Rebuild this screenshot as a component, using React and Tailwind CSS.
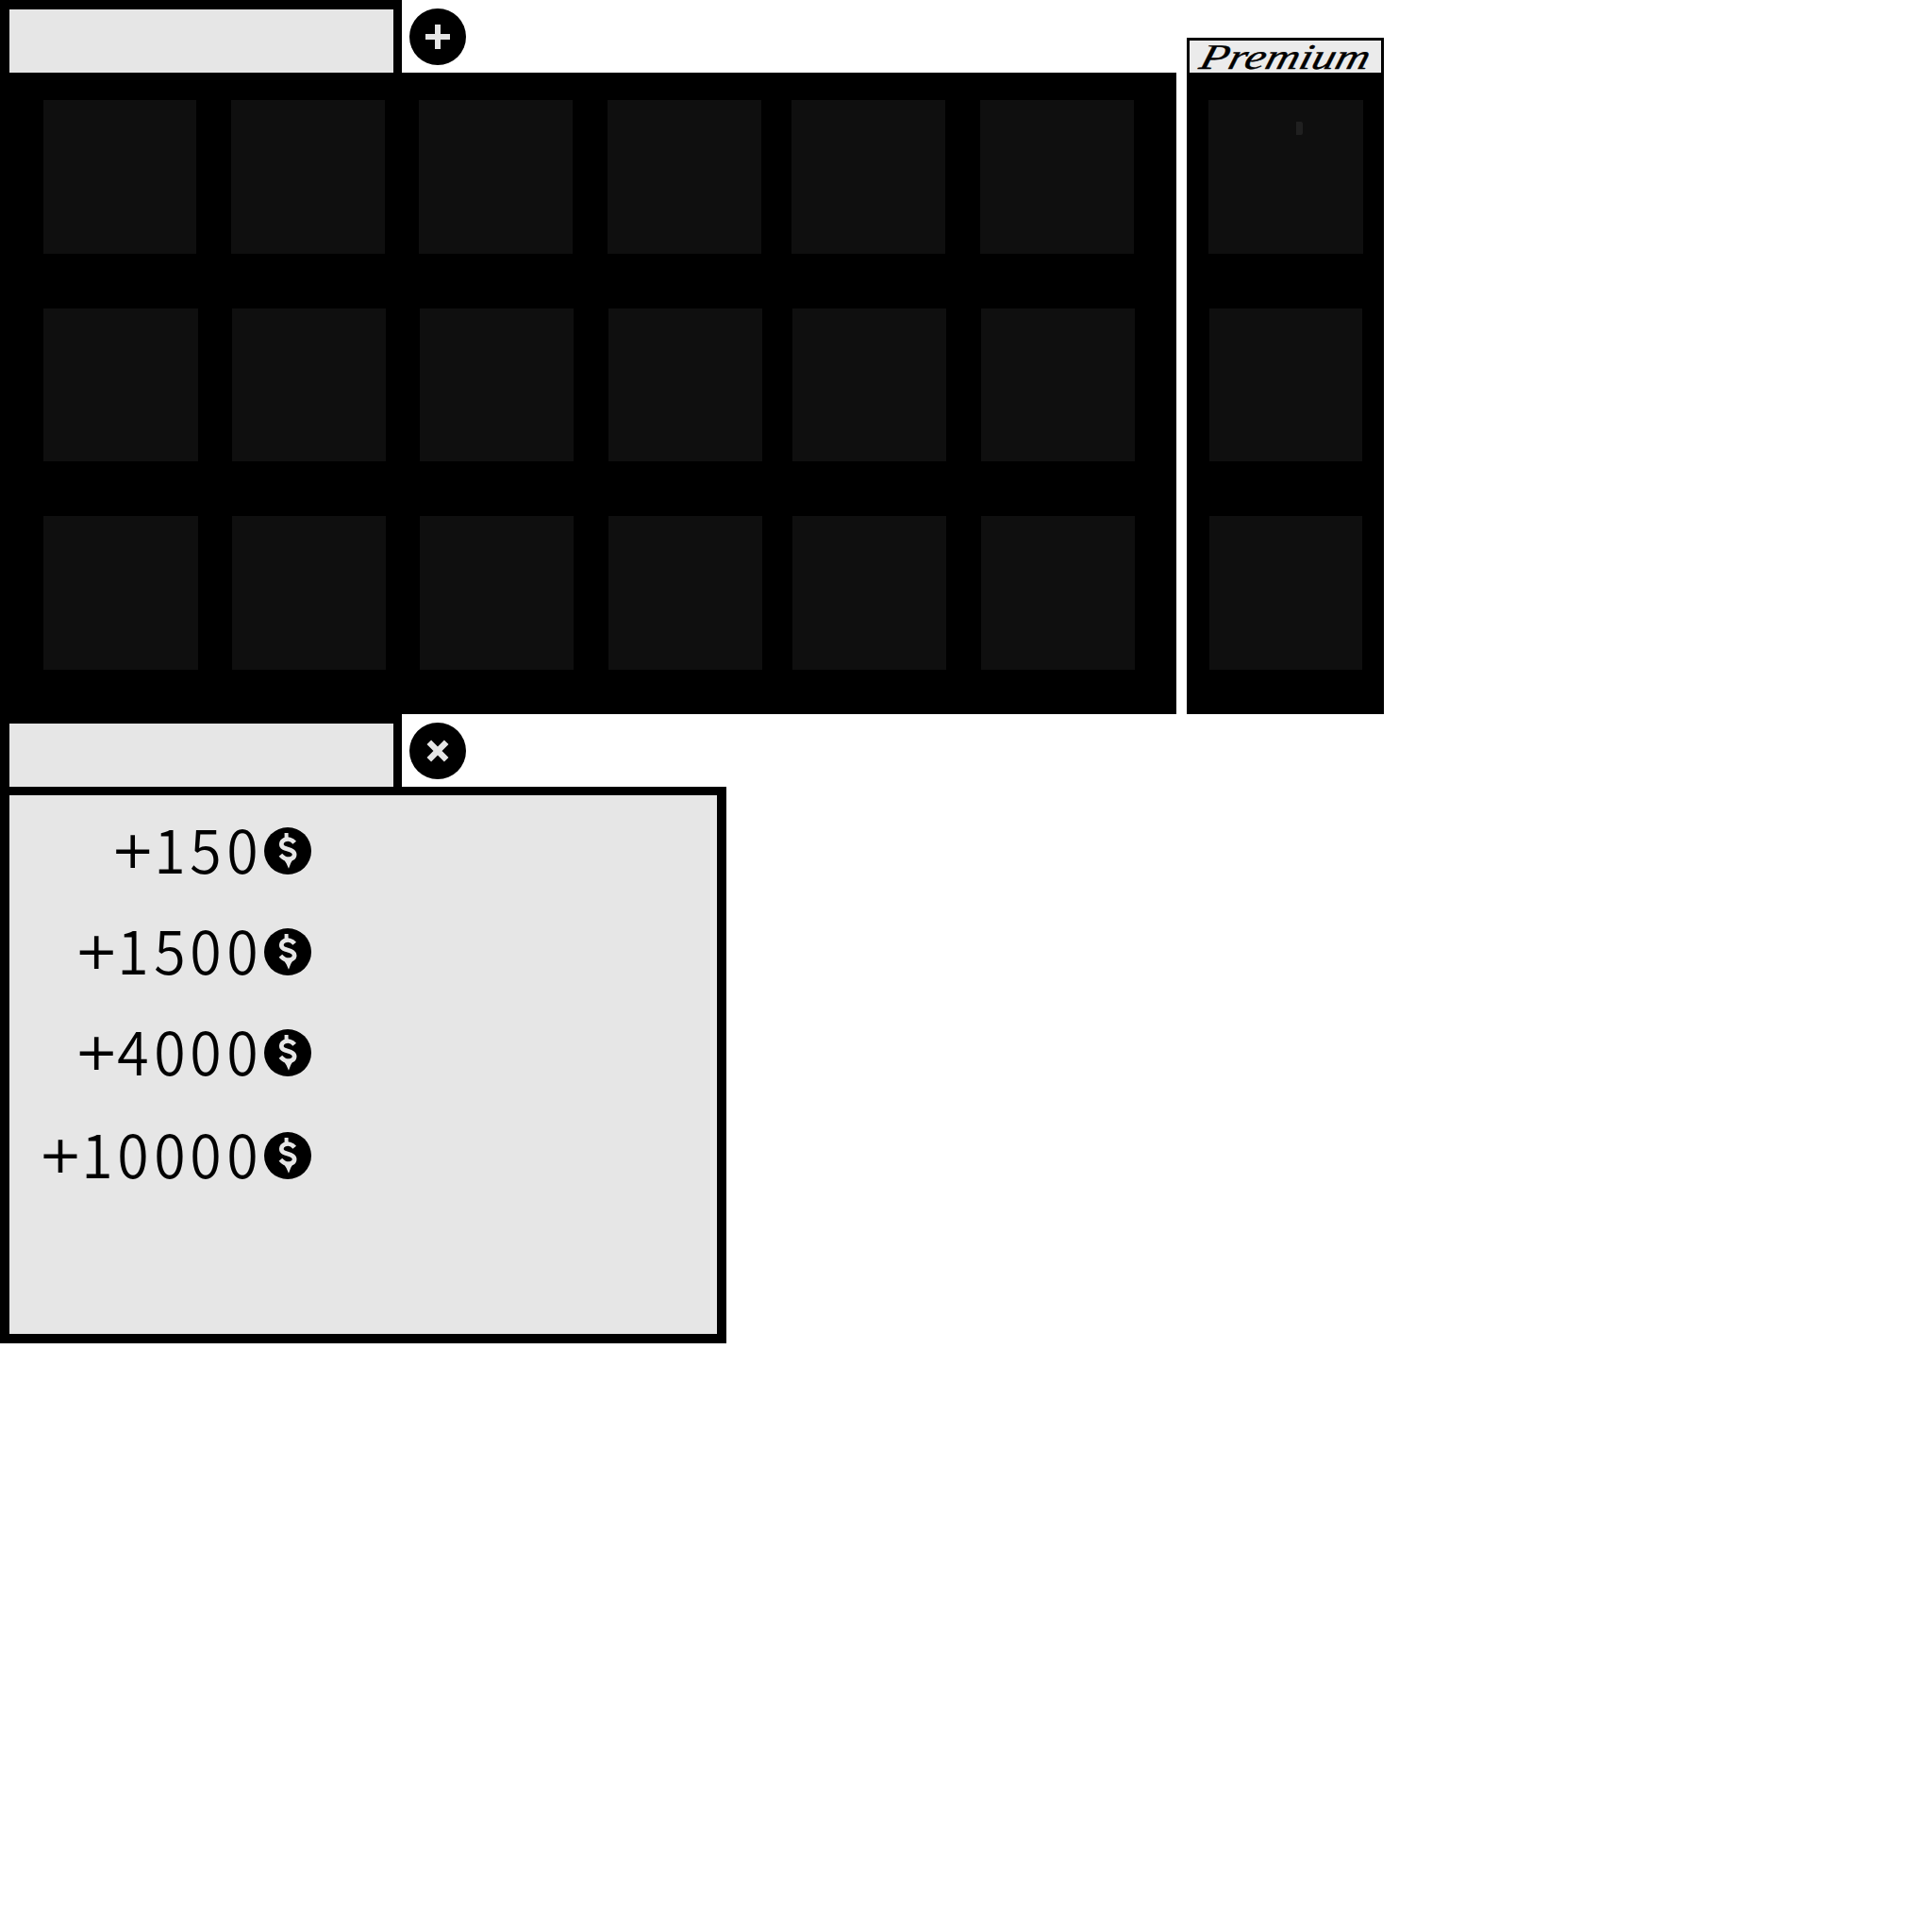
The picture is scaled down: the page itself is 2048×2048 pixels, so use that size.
function Slot({ className }) {
  return <div className={`shrink-0 bg-[#0f0f0f] ${className}`} />;
}

function Tab() {
  return (
    <div className="h-[77px] w-[426px] border-t-[10px] border-r-[9px] border-l-[10px] border-black bg-[#e6e6e6]" />
  );
}

function RoundButton({ label, className, children }) {
  return (
    <button aria-label={label} className={`ml-2 h-[60px] w-[60px] rounded-full bg-black ${className}`}>
      <svg viewBox="0 0 60 60" className="h-[60px] w-[60px]" stroke="#e6e6e6">
        {children}
      </svg>
    </button>
  );
}

function SlotRow({ first }) {
  if (first) {
    return (
      <div className="flex h-[163px]">
        <Slot className="ml-[46px] w-[162px]" />
        <Slot className="ml-[37px] w-[163px]" />
        <Slot className="ml-[36px] w-[163px]" />
        <Slot className="ml-[37px] w-[163px]" />
        <Slot className="ml-[32px] w-[163px]" />
        <Slot className="ml-[37px] w-[163px]" />
      </div>
    );
  }
  return (
    <div className="flex h-full">
      <Slot className="ml-[46px] w-[164px]" />
      <Slot className="ml-[36px] w-[163px]" />
      <Slot className="ml-[36px] w-[163px]" />
      <Slot className="ml-[37px] w-[163px]" />
      <Slot className="ml-[32px] w-[163px]" />
      <Slot className="ml-[37px] w-[163px]" />
    </div>
  );
}

function Coin() {
  return (
    <svg viewBox="0 0 50 50" className="ml-[5px] h-[50px] w-[50px] shrink-0">
      <circle cx="25" cy="25" r="25" fill="#000" />
      <path d="M21.6 6h4v6h-4z M20.5 33.5 31 33 28.2 38 26 43.7 23.6 38.3z" fill="#e6e6e6" />
      <path
        d="M32.2 16.2C29.5 12.8 25 11.8 21.8 13.2C17.5 15.2 17.2 19.6 20.8 21.6C23.5 23 27.5 23.4 30.2 25.4C33.5 28 32.3 32 28.5 33.2C24.5 34.4 20.3 32.6 17.4 29.2"
        fill="none"
        stroke="#e6e6e6"
        strokeWidth="4.7"
      />
    </svg>
  );
}

function Amount({ value }) {
  return (
    <div className="flex h-[50px] items-start justify-end">
      <span className="-mt-[1px] flex h-[50px] w-[38.4px] justify-center font-['DejaVu_Sans',sans-serif] text-[56px] leading-[50px]">
        <span>+</span>
      </span>
      {value.split("").map((digit, i) => (
        <span
          key={i}
          className="-mt-[4px] h-[50px] w-[38.4px] origin-center translate-x-[0.7px] scale-x-[0.95] text-center font-['Noto_Sans_CJK_JP',sans-serif] text-[64px] leading-[50px] font-[350]"
        >
          {digit}
        </span>
      ))}
      <Coin />
    </div>
  );
}

export default function App() {
  return (
    <main className="h-[2048px] w-[2048px] overflow-hidden bg-white text-black">
      <section className="flex h-[757px] items-start">
        <div className="w-[1247px]">
          <div className="flex h-[77px]">
            <Tab />
            <RoundButton label="Add" className="mt-[9px]">
              <path d="M17 30h26M30 17v26" strokeWidth="6" />
            </RoundButton>
          </div>
          <div className="h-[680px] bg-black pt-[29px]">
            <SlotRow first />
            <div className="mt-[58px] h-[162px]">
              <SlotRow />
            </div>
            <div className="mt-[58px] h-[163px]">
              <SlotRow />
            </div>
          </div>
        </div>
        <aside className="mt-[40px] ml-[11px] h-[717px] w-[209px] bg-black px-[3px] pt-[3px]">
          <div className="flex h-[34px] items-center justify-center bg-[#ebebeb]">
            <span className="origin-center -skew-x-12 scale-x-[1.3] font-['Liberation_Serif',serif] text-[38px] leading-[32px] italic [-webkit-text-stroke:0.4px_black]">
              Premium
            </span>
          </div>
          <div className="mt-[29px] ml-[20px] h-[163px] w-[164px] bg-[#0f0f0f] pt-[23px] pl-[93px]">
            <div className="h-[14px] w-[7px] rounded-r-[2px] bg-[#202020]" />
          </div>
          <Slot className="mt-[58px] ml-[21px] h-[162px] w-[162px]" />
          <Slot className="mt-[58px] ml-[21px] h-[163px] w-[162px]" />
        </aside>
      </section>
      <section>
        <div className="flex h-[77px]">
          <Tab />
          <RoundButton label="Close" className="mt-[9px]">
            <path d="M20.8 20.8l18.4 18.4M39.2 20.8L20.8 39.2" strokeWidth="6.5" />
          </RoundButton>
        </div>
        <div className="h-[590px] w-[770px] border-x-[10px] border-t-[9px] border-b-[10px] border-black bg-[#e6e6e6] pt-[34px]">
          <div className="w-[320px]">
            <Amount value="150" />
            <div className="mt-[57px]">
              <Amount value="1500" />
            </div>
            <div className="mt-[57px]">
              <Amount value="4000" />
            </div>
            <div className="mt-[59px]">
              <Amount value="10000" />
            </div>
          </div>
        </div>
      </section>
    </main>
  );
}
